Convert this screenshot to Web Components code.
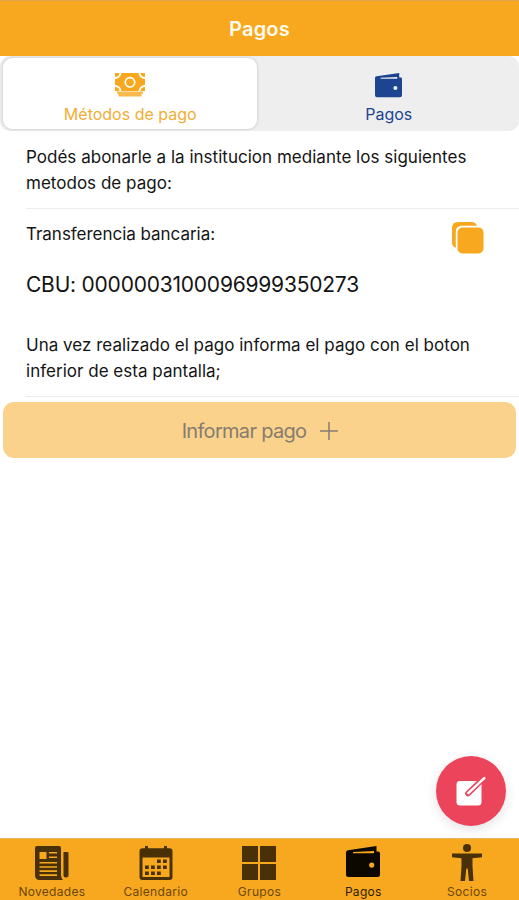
<!DOCTYPE html>
<html lang="es">
<head>
<meta charset="utf-8">
<meta name="viewport" content="width=device-width, initial-scale=1">
<title>Pagos</title>
<style>
  html, body {
    height: 100%;
    margin: 0;
    overflow: hidden;
  }
  body {
    --brand: #f8a81e;
    --brand-soft: #fbd28b;
    --accent: #1d4491;
    --danger: #ec445b;
    font-family: Inter, "Liberation Sans", sans-serif;
    color: #141414;
    background: #fff;
  }
</style>
</head>
<body>
<pay-app>
  <app-header slot="header">Pagos</app-header>
  <segment-bar slot="header">
    <segment-tab active>
      <app-icon slot="icon" name="cash" width="30" height="24"></app-icon>Métodos de pago
    </segment-tab>
    <segment-tab>
      <app-icon slot="icon" name="wallet" width="27" height="25"></app-icon>Pagos
    </segment-tab>
  </segment-bar>

  <text-item>Podés abonarle a la institucion mediante los siguientes metodos de pago:</text-item>
  <transfer-item cbu="0000003100096999350273">Transferencia bancaria:</transfer-item>
  <text-item>Una vez realizado el pago informa el pago con el boton inferior de esta pantalla;</text-item>
  <action-button>Informar pago</action-button>

  <fab-button slot="fab"></fab-button>

  <tab-bar slot="footer">
    <tab-button><app-icon slot="icon" name="news" width="34" height="34"></app-icon>Novedades</tab-button>
    <tab-button><app-icon slot="icon" name="calendar" width="34" height="34"></app-icon>Calendario</tab-button>
    <tab-button><app-icon slot="icon" name="grid" width="34" height="34"></app-icon>Grupos</tab-button>
    <tab-button selected><app-icon slot="icon" name="wallet" width="34" height="32"></app-icon>Pagos</tab-button>
    <tab-button><app-icon slot="icon" name="person" width="32" height="38"></app-icon>Socios</tab-button>
  </tab-bar>
</pay-app>

<script>
// Icon artwork: [viewBox, markup]
const ICONS = {
  cash: ["0 0 30 24", `
    <path fill="currentColor" d="M6.500 0h17A6.500 6.500 0 0 0 30 6V12A6.500 6.500 0 0 0 23.500 18h-17A6.500 6.500 0 0 0 0 12V6A6.500 6.500 0 0 0 6.500 0Z"/>
    <path fill="currentColor" d="M0 0h4.500A4.500 4.500 0 0 1 0 4ZM30 0h-4.500a4.500 4.500 0 0 0 4.500 4ZM0 18v-4A4.500 4.500 0 0 1 4.500 18ZM30 18v-4A4.500 4.500 0 0 0 25.500 18Z"/>
    <circle cx="15" cy="9.300" r="4.700" fill="none" stroke="#fff" stroke-width="1.700"/>
    <path fill="currentColor" opacity=".8" d="M2 18.500h26v2l-1.500.6v2.400h-23v-2.400L2 20.500Z"/>`],
  wallet: ["0 0 34 32", `
    <path fill="currentColor" fill-rule="evenodd" d="M0 6.200Q0 4.700 2 4.300L30.500 0v5.600h2Q34 5.600 34 7.300v21.200Q34 31 31.500 31h-29Q0 31 0 28.500ZM7 7.200h21V5.100L7 6ZM25.700 16.500a2.600 2.600 0 1 0 0 5.200a2.600 2.600 0 1 0 0-5.200Z"/>`],
  copy: ["0 0 32 32", `
    <path fill="currentColor" d="M25 3.800Q23.800 0 19.500 0H6Q0 0 0 6v14.500Q0 24.800 3.800 25.700V10Q3.800 3.800 10 3.800Z"/>
    <rect x="5.500" y="5.500" width="26" height="26" rx="5" fill="currentColor"/>`],
  news: ["0 0 34 34", `
    <path fill="currentColor" fill-rule="evenodd" d="M2 0h22q2 0 2 2v27q0 3 2 5H4Q0 33.500 0 29V2Q0 0 2 0ZM4.500 6v7h7V6ZM14 6v1.500h8V6ZM14 10.500V12h8v-1.500ZM4.500 16v1.600H22V16ZM4.500 20.200v1.600H22v-1.600ZM4.500 24.300v1.600H22v-1.600ZM4.500 28.300v1.600H22v-1.600Z"/>
    <path fill="currentColor" d="M28.500 6h4q1 0 1 1v22q0 2.500-2.500 2.500T28.500 29Z"/>`],
  calendar: ["0 0 34 34", `
    <path fill="currentColor" fill-rule="evenodd" d="M6 0h3v2.300h16V0h3v2.300h2.500q3 0 3 3V31q0 3-3 3h-27q-3 0-3-3V5.300q0-3 3-3H6ZM3.500 11.500V31h27V11.500Z"/>
    <path fill="currentColor" d="M18 13.500h3.800V17H18ZM24 13.500h3.800V17H24ZM6 19.500h3.800V23H6ZM12 19.500h3.800V23H12ZM18 19.500h3.800V23H18ZM24 19.500h3.800V23H24ZM6 25.500h3.800V29H6ZM12 25.500h3.800V29H12ZM18 25.500h3.800V29H18Z"/>`],
  grid: ["0 0 34 34", `
    <path fill="currentColor" d="M0 0h16v16H0ZM18 0h16v16H18ZM0 18h16v16H0ZM18 18h16v16H18Z"/>`],
  person: ["0 0 32 38", `
    <circle cx="16" cy="4" r="4" fill="currentColor"/>
    <path fill="currentColor" d="M1 9.500h30v3.800l-9.500 1v8L22.500 37H18l-1.300-12.500h-1.400L14 37H9.500l1-14.700v-8L1 13.300Z"/>`],
  add: ["0 0 18 18", `
    <path d="M9 .5v17M.5 9h17" stroke="currentColor" stroke-width="1.500" stroke-linecap="round"/>`],
  compose: ["0 0 32 30", `
    <rect x="1.500" y="5" width="25" height="24.500" rx="3.500" fill="currentColor"/>
    <path stroke="var(--danger)" stroke-width="5.600" stroke-linecap="round" d="M13 17.500L28 3"/>
    <path stroke="currentColor" stroke-width="2.500" stroke-linecap="round" d="M13.300 17.200L29.300 2.200"/>`],
};

class AppIcon extends HTMLElement {
  connectedCallback() {
    const [box, art] = ICONS[this.getAttribute("name")];
    const w = this.getAttribute("width");
    const h = this.getAttribute("height");
    const root = this.shadowRoot || this.attachShadow({ mode: "open" });
    root.innerHTML = `
      <style>
        :host { display: block; flex: none; width: ${w}px; height: ${h}px; }
        svg { display: block; }
      </style>
      <svg width="${w}" height="${h}" viewBox="${box}" preserveAspectRatio="none" aria-hidden="true">${art}</svg>
    `;
  }
}

/** Registers an element whose shadow root is a fixed piece of markup */
function define(name, html) {
  const template = document.createElement("template");
  template.innerHTML = html;
  customElements.define(name, class extends HTMLElement {
    constructor() {
      super();
      this.attachShadow({ mode: "open" }).append(template.content.cloneNode(true));
    }
  });
}

define("pay-app", `
  <style>
    :host {
      position: relative;
      display: flex;
      flex-direction: column;
      width: 100%;
      height: 100vh;
    }
    main { flex: 1; min-height: 0; }
    /* floats above the page content */
    .fab { position: absolute; right: 13px; bottom: 74px; }
  </style>
  <slot name="header"></slot>
  <main><slot></slot></main>
  <div class="fab"><slot name="fab"></slot></div>
  <slot name="footer"></slot>
`);

define("app-header", `
  <style>
    :host {
      display: flex;
      align-items: center;
      justify-content: center;
      box-sizing: border-box;
      height: 56px;
      border-top: 1px solid #dfa550;
      background: var(--brand);
      color: #fffaf0;
      font-size: 20px;
      font-weight: 600;
      letter-spacing: .2px;
    }
  </style>
  <slot></slot>
`);

define("segment-bar", `
  <style>
    :host {
      display: grid;
      grid-template-columns: 1fr 1fr;
      box-sizing: border-box;
      height: 75px;
      padding: 2px;
      border-radius: 10px;
      background: #eeeeee;
    }
  </style>
  <slot></slot>
`);

define("segment-tab", `
  <style>
    :host {
      display: flex;
      flex-direction: column;
      align-items: center;
      box-sizing: border-box;
      margin: 0 0 0 1px;
      padding-top: 14px;
      border-radius: 9px;
      color: var(--accent);
      font-size: 16px;
    }
    :host([active]) {
      margin-right: 3px;
      padding-left: 1px;
      background: #fff;
      color: #f0ae35;
      box-shadow: 0 0 3px rgba(0, 0, 0, .22);
    }
    .icon { display: flex; align-items: center; height: 26px; }
    :host([active]) .icon { color: var(--brand); }
    .label { margin-top: 6px; line-height: 20px; }
  </style>
  <div class="icon"><slot name="icon"></slot></div>
  <div class="label"><slot></slot></div>
`);

define("text-item", `
  <style>
    :host {
      display: block;
      box-sizing: border-box;
      height: 78px;
      margin-left: 26px;
      padding: 13px 26px 0 0;
      border-bottom: 1px solid #ececec;
      font-size: 17px;
      line-height: 26px;
      letter-spacing: .02px;
    }
  </style>
  <slot></slot>
`);

class TransferItem extends HTMLElement {
  connectedCallback() {
    const root = this.shadowRoot || this.attachShadow({ mode: "open" });
    root.innerHTML = `
      <style>
        :host {
          display: block;
          box-sizing: border-box;
          height: 110px;
          padding: 13px 35px 0 26px;
        }
        .row { display: flex; justify-content: space-between; }
        .title { font-size: 17px; line-height: 24px; letter-spacing: -.03px; }
        app-icon { color: var(--brand); }
        .cbu { margin-top: 18px; font-size: 21px; line-height: 26px; letter-spacing: -.22px; }
      </style>
      <div class="row">
        <div class="title"><slot></slot></div>
        <app-icon name="copy" width="32" height="32"></app-icon>
      </div>
      <div class="cbu">CBU: ${this.getAttribute("cbu")}</div>
    `;
  }
}

define("action-button", `
  <style>
    :host {
      display: flex;
      align-items: center;
      justify-content: center;
      gap: 14px;
      box-sizing: border-box;
      height: 56px;
      margin: 5px 3px 0;
      padding: 2px 0 0 1px;
      border-radius: 11px;
      background: var(--brand-soft);
      color: #857c70;
      font-size: 20px;
      letter-spacing: -.7px;
    }
  </style>
  <span><slot></slot></span>
  <app-icon name="add" width="18" height="18"></app-icon>
`);

define("fab-button", `
  <style>
    :host {
      display: flex;
      align-items: center;
      justify-content: center;
      width: 70px;
      height: 70px;
      border-radius: 50%;
      background: var(--danger);
      color: #fff;
      box-shadow: 0 3px 12px rgba(0, 0, 0, .12);
    }
  </style>
  <app-icon name="compose" width="32" height="30"></app-icon>
`);

define("tab-bar", `
  <style>
    :host {
      display: grid;
      grid-template-columns: repeat(5, 1fr);
      box-sizing: border-box;
      height: 62px;
      border-top: 1px solid #eab75c;
      background: var(--brand);
    }
  </style>
  <slot></slot>
`);

define("tab-button", `
  <style>
    :host {
      display: flex;
      flex-direction: column;
      align-items: center;
      padding-top: 5px;
      color: #493006;
      font-size: 12px;
      letter-spacing: .3px;
    }
    :host([selected]) { color: #0c0800; }
    .icon { display: flex; align-items: center; height: 38px; }
    :host([selected]) .icon { height: 36px; padding-bottom: 2px; }
    .label { margin-top: 2px; line-height: 15px; color: #6b470b; }
    :host([selected]) .label { color: #2b1c03; }
  </style>
  <div class="icon"><slot name="icon"></slot></div>
  <div class="label"><slot></slot></div>
`);

customElements.define("app-icon", AppIcon);
customElements.define("transfer-item", TransferItem);
</script>
</body>
</html>
